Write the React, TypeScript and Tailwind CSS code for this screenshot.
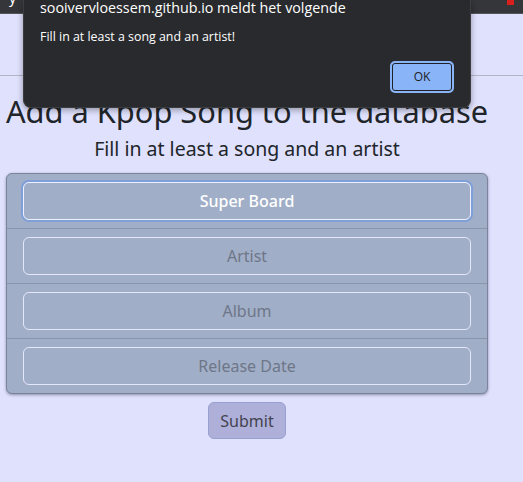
import { useState } from 'react';

const fields = ['Artist', 'Album', 'Release Date'];

export default function App() {
  const [song, setSong] = useState('Super Board');

  return (
    <div className="relative min-h-[482px] bg-[#dfe1fd] font-['Noto_Sans',sans-serif] text-[#212529]">
      {/* browser chrome strip */}
      <div className="flex h-[14px] items-start justify-between border-b border-[#55565a] bg-[#35363a] px-[9px]">
        <span className="-mt-[9px] text-[14px] leading-none text-white">y</span>
        <span className="h-[5px] w-[7px] bg-[#d9201c]" />
      </div>

      {/* nav placeholder */}
      <div className="h-[62px] border-b border-[#b3b4c6]" />

      <main className="flex w-[494px] flex-col items-center">
        <h1 className="mt-[16px] text-[30.8px] leading-[38px] whitespace-nowrap">Add a Kpop Song to the database</h1>
        <p className="mt-[5px] text-[19.5px] leading-[28px]">Fill in at least a song and an artist</p>

        <div className="mt-[10px] w-[482px] overflow-hidden rounded-[6px] border border-[#7c849c] bg-[#a1aec7] shadow-[0_1px_3px_rgba(40,40,70,0.45)]">
          <div className="border-b border-[#8a94ab] px-[16px] py-[8px]">
            <input
              value={song}
              onChange={(e) => setSong(e.target.value)}
              className="h-[38px] w-full rounded-[6px] border border-[#eef0ff] bg-transparent text-center text-[16px] font-medium text-white outline-none ring-[2px] ring-[#7f9fd9]"
            />
          </div>
          {fields.map((f, i) => (
            <div
              key={f}
              className={i < fields.length - 1 ? 'border-b border-[#8a94ab] px-[16px] py-[8px]' : 'px-[16px] py-[8px]'}
            >
              <input
                placeholder={f}
                className="h-[38px] w-full rounded-[6px] border border-[#e4e6fa] bg-transparent text-center text-[16px] text-white outline-none placeholder:text-[#6e7788]"
              />
            </div>
          ))}
        </div>

        <button className="mt-[8px] h-[37px] w-[78px] rounded-[6px] border border-[#98a0cf] bg-[#aeb0d9] text-[16px] text-[#43434f]">
          Submit
        </button>
      </main>

      {/* alert dialog */}
      <div className="absolute left-[23px] top-0 flex h-[108px] w-[448px] flex-col rounded-b-[8px] border border-t-0 border-[#3c3d40] bg-[#292a2d] px-[16px] font-['Open_Sans',sans-serif] text-white shadow-[0_2px_6px_rgba(0,0,0,0.35)]">
        <div className="pt-[1px] text-[14.3px] leading-[14px]">sooivervloessem.github.io meldt het volgende</div>
        <div className="mt-[14px] text-[12.4px] leading-[16px]">Fill in at least a song and an artist!</div>
        <div className="mt-[16px] flex justify-end">
          <button className="h-[32px] w-[64px] rounded-[5px] border-[2px] border-[#8ab4f8] bg-[#8ab4f8] text-[12px] text-[#202124] shadow-[inset_0_0_0_1px_#202124]">
            OK
          </button>
        </div>
      </div>
    </div>
  );
}
